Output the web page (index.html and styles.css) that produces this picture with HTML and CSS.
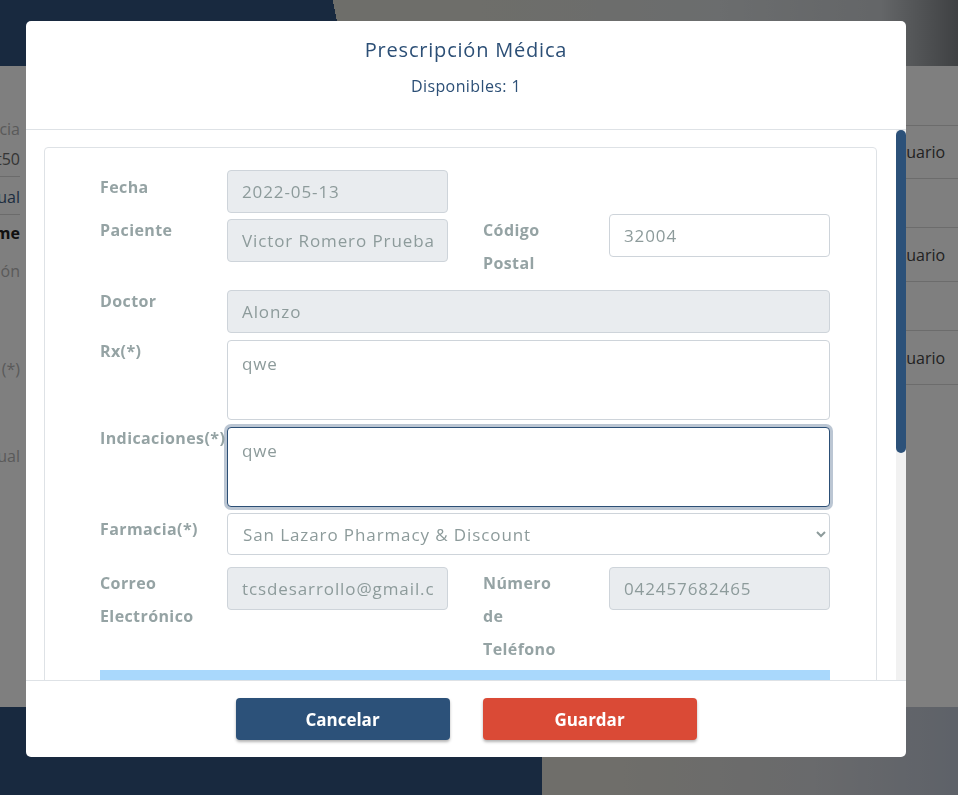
FILE: index.html
```html
<!DOCTYPE html>
<html lang="es">
<head>
<meta charset="utf-8">
<title>Prescripción Médica</title>
<link rel="stylesheet" href="styles.css">
</head>
<body>
<div class="page">
  <header class="topbar"></header>
  <main class="content">
    <div class="left-col">
      <div class="bg-text muted l1">Distancia</div>
      <div class="bg-text dark l2 ruled">Prueba Test50</div>
      <div class="bg-text navy l3 ruled">Manual</div>
      <div class="bg-text strong l4">Nombre Medicame</div>
      <div class="bg-text muted l5">Descripción</div>
      <div class="bg-text muted l6">Cantidad (*)</div>
      <div class="bg-text muted l7">Manual</div>
    </div>
    <div class="right-col">
      <div class="bg-row tall first">Usuario</div>
      <div class="bg-row short"></div>
      <div class="bg-row tall">Usuario</div>
      <div class="bg-row short"></div>
      <div class="bg-row tall">Usuario</div>
    </div>
  </main>
  <footer class="bottombar"></footer>
</div>

<div class="backdrop"></div>

<div class="modal-wrap">
  <div class="modal">
    <div class="modal-header">
      <h1 class="modal-title">Prescripción Médica</h1>
      <p class="modal-sub">Disponibles: 1</p>
    </div>
    <div class="modal-body">
      <div class="scroll-area">
        <div class="card">
          <div class="row row-a">
            <label class="lbl">Fecha</label>
            <input class="field half" type="text" value="2022-05-13" disabled>
          </div>
          <div class="row row-b">
            <label class="lbl">Paciente</label>
            <input class="field half drop5" type="text" value="Victor Romero Prueba" disabled>
            <label class="lbl lbl2">Código Postal</label>
            <input class="field half" type="text" value="32004">
          </div>
          <div class="row row-c">
            <label class="lbl">Doctor</label>
            <input class="field full drop5" type="text" value="Alonzo" disabled>
          </div>
          <div class="row row-d">
            <label class="lbl">Rx(*)</label>
            <textarea class="field full area drop5">qwe</textarea>
          </div>
          <div class="row row-e">
            <label class="lbl">Indicaciones(*)</label>
            <textarea class="field full area focus drop5">qwe</textarea>
          </div>
          <div class="row row-f">
            <label class="lbl">Farmacia(*)</label>
            <select class="field full sel">
              <option>San Lazaro Pharmacy &amp; Discount</option>
            </select>
          </div>
          <div class="row row-g">
            <label class="lbl">Correo Electrónico</label>
            <input class="field half" type="text" value="tcsdesarrollo@gmail.com" disabled>
            <label class="lbl lbl2">Número de Teléfono</label>
            <input class="field half" type="text" value="042457682465" disabled>
          </div>
          <div class="table-head"></div>
        </div>
      </div>
      <div class="scrollbar"><div class="thumb"></div></div>
    </div>
    <div class="modal-footer">
      <button class="btn btn-cancel" type="button">Cancelar</button>
      <button class="btn btn-save" type="button">Guardar</button>
    </div>
  </div>
</div>
</body>
</html>
```
FILE: styles.css
```css
* { box-sizing: border-box; }

html, body {
  margin: 0;
  height: 100%;
}

body {
  font-family: "Open Sans", "Liberation Sans", sans-serif;
  background: #ffffff;
  overflow: hidden;
}

/* ---------- background page ---------- */
.page {
  display: flex;
  flex-direction: column;
  height: 795px;
}

.topbar {
  height: 66px;
  flex: none;
  background:
    linear-gradient(78deg, #30527e 339px, transparent 339px),
    linear-gradient(90deg, #dcdcd4 0, #dcdcd4 50%, #d6dadc 75%, #c8ccd0 92%, #7e8286 100%);
}

.content {
  flex: 1;
  display: flex;
  overflow: hidden;
  font-size: 16px;
}

.left-col {
  width: 200px;
  margin-left: -180px;
  padding-top: 53px;
  text-align: right;
  white-space: nowrap;
  display: flex;
  flex-direction: column;
}

.bg-text { line-height: 20px; }
.bg-text.muted { color: #b4b4b4; }
.bg-text.dark { color: #6a6a6a; }
.bg-text.navy { color: #3a5a80; }
.bg-text.strong { color: #222; font-weight: 700; }
.bg-text.ruled { border-bottom: 1px solid #d6d6d6; padding-bottom: 7px; }
.l2 { margin-top: 10px; }
.l3 { margin-top: 10px; }
.l4 { margin-top: 8px; }
.l5 { margin-top: 18px; }
.l6 { margin-top: 78px; }
.l7 { margin-top: 67px; }

.right-col {
  margin-left: auto;
  width: 71px;
  padding-top: 59px;
  white-space: nowrap;
  display: flex;
  flex-direction: column;
}

.bg-row {
  border-bottom: 1px solid #d8d8d8;
  color: #444;
  display: flex;
  align-items: center;
}
.bg-row.first { border-top: 1px solid #d8d8d8; }
.bg-row.tall { height: 54px; }
.bg-row.short { height: 49px; }

.bottombar {
  height: 88px;
  flex: none;
  background:
    linear-gradient(91deg, #30527e 543px, transparent 543px),
    linear-gradient(90deg, #dedcd4 0, #dedcd4 65%, #d2d4d8 85%, #bcc4d2 100%);
}

.backdrop {
  position: fixed;
  inset: 0;
  background: rgba(0, 0, 0, 0.5);
}

/* ---------- modal ---------- */
.modal-wrap {
  position: fixed;
  inset: 0;
  padding: 21px 52px 38px 26px;
  display: flex;
}

.modal {
  width: 880px;
  height: 736px;
  background: #fff;
  border-radius: 5px;
  display: flex;
  flex-direction: column;
  overflow: hidden;
}

.modal-header {
  height: 109px;
  flex: none;
  border-bottom: 1px solid #dee2e6;
  text-align: center;
  padding-top: 17px;
  color: #2c4f76;
}

.modal-title {
  margin: 0;
  font-size: 20px;
  line-height: 24px;
  font-weight: 400;
  letter-spacing: 0.8px;
}

.modal-sub {
  margin: 14px 0 0;
  font-size: 16px;
  line-height: 20px;
  letter-spacing: 0.4px;
}

.modal-body {
  flex: 1;
  display: flex;
  overflow: hidden;
}

.scroll-area {
  flex: 1;
  overflow: hidden;
  padding: 17px 19px 0 18px;
}

.scrollbar {
  width: 10px;
  flex: none;
  background: #f1f1f1;
}

.thumb {
  height: 323px;
  background: #2c5179;
  border-radius: 5px;
}

.card {
  border: 1px solid #dee2e6;
  border-radius: 4px;
  padding: 23px 46px 0 55px;
  min-height: 902px;
}

.row {
  display: flex;
  align-items: flex-start;
  width: 730px;
}
.row-a .field { margin-top: -1px; }
.row-b { margin-top: 1px; }
.row-c { margin-top: 5px; }
.row-d { margin-top: 2px; }
.row-e { margin-top: 2px; }
.row-f { margin-top: 6px; }
.row-g { margin-top: 12px; }

.lbl {
  width: 127px;
  flex: none;
  font-size: 16px;
  line-height: 33px;
  font-weight: 700;
  letter-spacing: 0.4px;
  color: #95a3a4;
}
.lbl2 {
  width: 80px;
  margin-left: 35px;
  margin-right: 46px;
}

.field {
  flex: none;
  height: 43px;
  border: 1px solid #ced4da;
  border-radius: 4px;
  padding: 0 14px;
  font-family: inherit;
  font-size: 17px;
  letter-spacing: 0.9px;
  color: #8d9b9b;
  background: #fff;
  outline: none;
}
.field:disabled { background: #e9ecef; color: #8d9b9b; }
.half { width: 221px; }
.full { width: 603px; }
.drop5 { margin-top: 5px; }

.area {
  height: 80px;
  padding: 11px 14px;
  line-height: 24px;
  resize: none;
}

.focus {
  border-color: #2c4f76;
  box-shadow: 0 0 0 3px rgba(44, 79, 118, 0.32);
}

.sel {
  height: 42px;
  padding: 0 11px;
}

.table-head {
  margin-top: 4px;
  width: 730px;
  height: 40px;
  background: #a9d8fc;
}

/* ---------- footer ---------- */
.modal-footer {
  flex: none;
  border-top: 1px solid #dee2e6;
  padding: 17px 0;
  display: flex;
  justify-content: center;
  gap: 33px;
}

.btn {
  width: 214px;
  height: 42px;
  border: none;
  border-radius: 4px;
  color: #fff;
  font-family: inherit;
  font-size: 17px;
  font-weight: 700;
  box-shadow: 0 2px 3px rgba(0, 0, 0, 0.3);
}
.btn-cancel { background: #2c5179; }
.btn-save { background: #da4a36; }
```
